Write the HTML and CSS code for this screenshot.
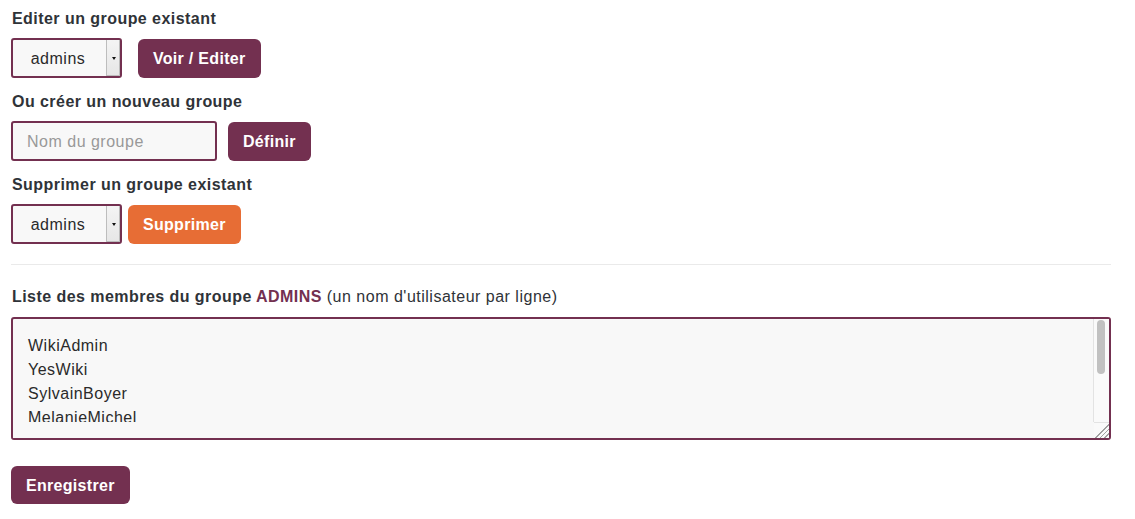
FILE: index.html
```html
<!DOCTYPE html>
<html lang="fr">
<head>
<meta charset="utf-8">
<title>Groupes</title>
<link rel="stylesheet" href="styles.css">
</head>
<body>
<div class="page">
  <form class="group-form">
    <label class="label" for="edit-group">Editer un groupe existant</label>
    <div class="row row-edit">
      <div class="select-wrap">
        <select id="edit-group" class="select"><option>admins</option></select>
      </div>
      <button type="button" class="btn btn-primary btn-gap-lg">Voir / Editer</button>
    </div>

    <label class="label" for="new-group">Ou créer un nouveau groupe</label>
    <div class="row row-new">
      <input id="new-group" class="input" type="text" placeholder="Nom du groupe">
      <button type="button" class="btn btn-primary btn-gap-md">Définir</button>
    </div>

    <label class="label" for="del-group">Supprimer un groupe existant</label>
    <div class="row row-del">
      <div class="select-wrap">
        <select id="del-group" class="select"><option>admins</option></select>
      </div>
      <button type="button" class="btn btn-danger btn-gap-sm">Supprimer</button>
    </div>
  </form>

  <hr class="sep">

  <form class="members-form">
    <label class="label members-label" for="members">Liste des membres du groupe <span class="group-name">ADMINS</span> <span class="hint">(un nom d'utilisateur par ligne)</span></label>
    <div class="members-box">
      <textarea id="members" class="members">WikiAdmin
YesWiki
SylvainBoyer
MelanieMichel
FlorianSchmitt
LaurentMarseault
ChristianResche</textarea>
      <span class="scroll-track" aria-hidden="true">
        <span class="scroll-thumb"></span>
        <span class="scroll-grip"></span>
      </span>
    </div>
    <button type="button" class="btn btn-primary btn-save">Enregistrer</button>
  </form>
</div>
</body>
</html>
```

FILE: styles.css
```css
* { box-sizing: border-box; }

html, body {
  margin: 0;
  padding: 0;
  background: #ffffff;
}

body {
  font-family: "Liberation Sans", Arial, Helvetica, sans-serif;
  font-size: 16px;
  color: #333333;
}

.page {
  padding: 9px 24px 0 11px;
  width: 1135px;
}

.group-form,
.members-form {
  margin: 0;
}

.label {
  display: block;
  font-weight: bold;
  font-size: 16px;
  line-height: 20px;
  letter-spacing: 0.45px;
  color: #2f3338;
  margin: 0 0 9px 1px;
}

.row {
  display: flex;
  align-items: center;
}

.row-edit { margin-bottom: 14px; }
.row-new { margin-bottom: 14px; }
.row-del { margin-bottom: 0; }

/* select */
.select-wrap {
  position: relative;
  width: 111px;
  height: 40px;
}

.select {
  -webkit-appearance: none;
  appearance: none;
  width: 111px;
  height: 40px;
  margin: 0;
  border: 2px solid #733050;
  border-radius: 3px;
  background: #f8f8f8;
  font-family: "Liberation Sans", Arial, sans-serif;
  font-size: 16px;
  letter-spacing: 0.5px;
  color: #2a2a2a;
  padding: 0 17px 0 0;
  text-align: center;
  text-align-last: center;
}

.select-wrap::before {
  content: "";
  position: absolute;
  top: 2px;
  bottom: 2px;
  right: 2px;
  width: 13px;
  background: linear-gradient(#f4f4f4, #e6e6e6);
  border-left: 1px solid #bdbdbd;
  box-shadow: inset -1px -1px 0 #bcbcbc;
  pointer-events: none;
}

.select-wrap::after {
  content: "";
  position: absolute;
  top: 19px;
  right: 6px;
  width: 0;
  height: 0;
  border-left: 2.5px solid transparent;
  border-right: 2.5px solid transparent;
  border-top: 3px solid #111;
  pointer-events: none;
}

/* text input */
.input {
  width: 206px;
  height: 40px;
  margin: 0;
  border: 2px solid #733050;
  border-radius: 3px;
  background: #f8f8f8;
  padding: 2px 14px 0;
  font-family: "Liberation Sans", Arial, sans-serif;
  font-size: 16px;
  letter-spacing: 0.5px;
  color: #333;
}

.input::placeholder {
  color: #999999;
  opacity: 1;
}

/* buttons */
.btn {
  display: inline-flex;
  align-items: center;
  justify-content: center;
  height: 39px;
  margin: 0;
  padding: 1px 15px 0;
  border: none;
  border-radius: 6px;
  font-family: "Liberation Sans", Arial, sans-serif;
  font-weight: bold;
  font-size: 16px;
  letter-spacing: 0.3px;
  color: #ffffff;
  cursor: pointer;
}

.btn-primary { background: #733050; }
.btn-danger { background: #e76d35; }

.btn-gap-lg { margin-left: 16px; }
.btn-gap-md { margin-left: 11px; }
.btn-gap-sm { margin-left: 6px; }

.sep {
  border: 0;
  border-top: 1px solid #eaeaea;
  margin: 20px 0 22px 0;
  height: 0;
}

.members-label {
  margin-bottom: 10px;
}

.group-name {
  color: #733050;
}

.hint {
  font-weight: normal;
  letter-spacing: 0.5px;
}

.members-box {
  position: relative;
  width: 1100px;
  height: 123px;
}

.members {
  display: block;
  width: 1100px;
  height: 123px;
  margin: 0;
  border: 2px solid #733050;
  border-radius: 3px;
  background: #f8f8f8;
  padding: 15px 32px 15px 15px;
  font-family: "Liberation Sans", Arial, sans-serif;
  font-size: 16px;
  line-height: 24px;
  letter-spacing: 0.5px;
  color: #2a2a2a;
  overflow: hidden;
  resize: none;
}

.members-box::after {
  content: "";
  position: absolute;
  left: 2px;
  right: 17px;
  bottom: 2px;
  height: 16px;
  background: #f8f8f8;
  pointer-events: none;
}

/* drawn scrollbar overlaying the textarea's right edge */
.scroll-track {
  position: absolute;
  top: 2px;
  right: 2px;
  bottom: 2px;
  width: 16px;
  background: #fafafa;
  border-left: 1px solid #e3e3e3;
  pointer-events: none;
}

.scroll-thumb {
  position: absolute;
  top: 1px;
  left: 3px;
  width: 8px;
  height: 54px;
  border-radius: 4px;
  background: #c1c1c1;
}

.scroll-grip {
  position: absolute;
  left: 0;
  right: 0;
  bottom: 0;
  height: 16px;
  border-top: 1px solid #e3e3e3;
  background:
    linear-gradient(135deg, transparent 52%, #a0a0a0 52%, #a0a0a0 58%, transparent 58%, transparent 67%, #a0a0a0 67%, #a0a0a0 73%, transparent 73%, transparent 82%, #a0a0a0 82%, #a0a0a0 88%, transparent 88%);
}

.btn-save {
  margin-top: 26px;
  height: 38px;
}
```
